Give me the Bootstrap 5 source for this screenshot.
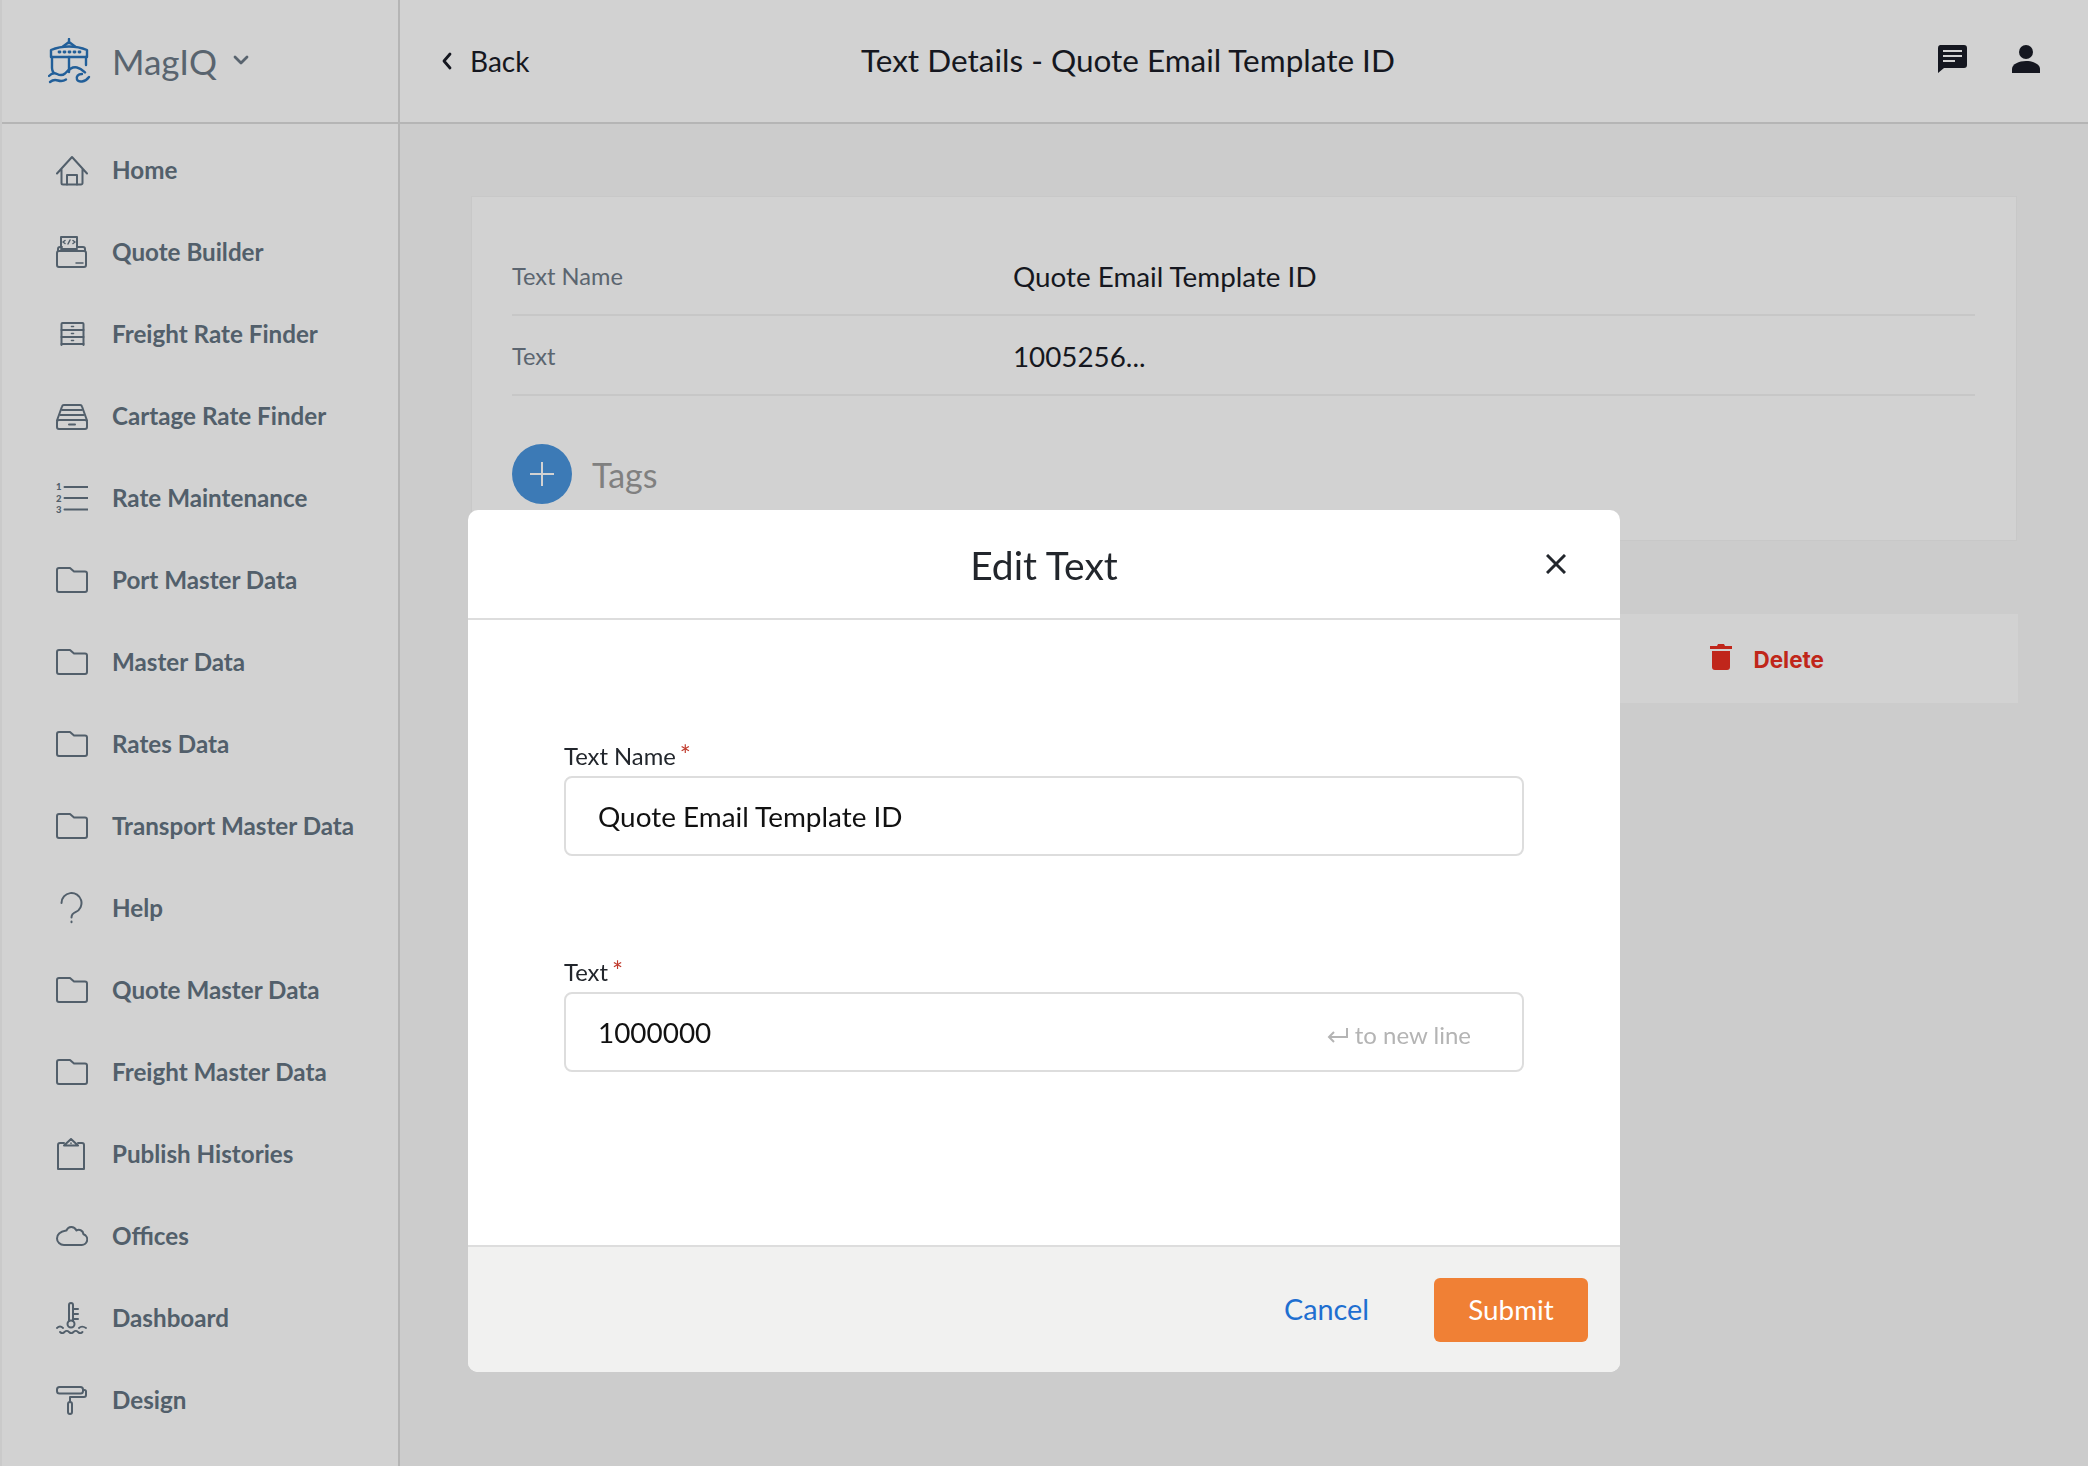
<!doctype html>
<html lang="en">
<head>
    <meta charset="utf-8">
    <title>MagIQ - Text Details</title>
    <meta name="viewport" content="width=device-width, initial-scale=1">

    <!-- Bootstrap 5 CDN -->
    <link href="https://cdn.jsdelivr.net/npm/bootstrap@5.3.3/dist/css/bootstrap.min.css" rel="stylesheet">

    <style>
        body {
            font-family: "Lato", "Liberation Sans", sans-serif;
            background-color: #f8f8f8;
            color: #1a1d27;
            overflow: hidden;
        }
        .app-shell { height: 1466px; }

        /* sidebar */
        .side-col {
            width: 400px;
            flex: 0 0 400px;
            background: #fff;
            border-right: 2px solid #dcdcdc;
            border-left: 2px solid #f6f6f6;
        }
        .top-cell {
            height: 124px;
            border-bottom: 2px solid #dcdcdc;
            background: #fff;
        }
        .brand-box { padding-left: 46px; }
        .brand-name {
            font-size: 35px;
            line-height: 44px;
            height: 42px;
            overflow: hidden;
            color: #6d7a87;
            margin-left: 20px;
            margin-bottom: 3px;
        }
        .brand-caret { margin-left: 16px; margin-bottom: 1px; }
        .menu-list { padding-top: 5px; }
        .menu-item {
            height: 82px;
            padding-left: 54px;
            gap: 24px;
            color: #647482;
            font-size: 24.2px;
            font-weight: 700;
        }
        .menu-item svg { flex: 0 0 32px; }
        .line-icon {
            fill: none;
            stroke: #647482;
            stroke-width: 2;
            stroke-linecap: round;
            stroke-linejoin: round;
        }
        .line-icon text { fill: #647482; stroke: none; font-size: 9.5px; font-weight: 900; }

        /* header */
        .back-link { font-size: 28px; margin-left: 41px; width: 420px; }
        .back-link span { margin-left: 1px; }
        .page-title { font-size: 31.5px; }
        .head-icons { gap: 44px; padding-right: 47px; padding-bottom: 5px; }

        /* details */
        .main-body { padding: 72px 71px 0 71px; }
        .detail-box {
            background: #fff;
            border: 1px solid #f3f3f3;
            padding: 39px 41px 36px 40px;
        }
        .detail-row {
            height: 80px;
            padding-top: 4px;
            border-bottom: 2px solid #f2f2f2;
        }
        .detail-key { width: 501px; color: #6f7b88; font-size: 23.6px; }
        .detail-val { font-size: 27.8px; }
        .tag-row { margin-top: 48px; gap: 20px; }
        .add-dot {
            width: 60px;
            height: 60px;
            background: #4a95dd;
        }
        .tag-label { font-size: 34px; color: #9c9c9c; }
        .action-bar {
            height: 89px;
            margin-top: 73px;
            margin-right: -1px;
            background: #fff;
            padding-top: 2px;
            padding-right: 194px;
            color: #ea2f21;
            font-family: "Inter", "Liberation Sans", sans-serif;
            font-weight: 700;
            font-size: 22.5px;
            gap: 21px;
        }
        .trash-mark { margin-bottom: 6px; }

        /* dialog */
        .modal-backdrop.show { opacity: .176; }
        .edit-dialog {
            max-width: 1152px;
            margin: 510px auto 0 auto;
        }
        .edit-dialog .modal-content { border: 0; border-radius: 10px; overflow: hidden; }
        .edit-dialog .modal-header {
            height: 110px;
            border-bottom: 2px solid #ddd;
            padding: 2px 0 0 0;
        }
        .edit-dialog .modal-title { font-size: 39px; font-weight: 400; color: #22262c; }
        .close-x {
            position: absolute;
            right: 54px;
            top: 44px;
            padding: 0;
            border: 0;
            background: none;
            line-height: 0;
        }
        .edit-dialog .modal-body {
            height: 625px;
            padding: 121px 96px 0 96px;
        }
        .field-gap { margin-bottom: 101px; }
        .field-label { height: 30px; font-size: 23.8px; line-height: 30px; margin-bottom: 5px; color: #22262c; }
        .req-star { color: #c0392b; margin-left: 4px; font-size: 26px; line-height: 0; }
        .edit-dialog .form-control {
            height: 80px;
            border: 2px solid #ddd;
            border-radius: 8px;
            padding: 0 32px;
            font-size: 27.9px;
            color: #111;
        }
        .newline-hint {
            position: absolute;
            right: 53px;
            top: 28px;
            color: #b4b4b4;
            font-size: 24px;
            line-height: 30px;
            gap: 7px;
        }
        .edit-dialog .modal-footer {
            height: 127px;
            background: #f1f1f0;
            border-top: 2px solid #ddd;
            padding: 0 32px 0 0;
            gap: 65px;
            border-radius: 0;
        }
        .edit-dialog .modal-footer > * { margin: 0; }
        .cancel-link { color: #1f6fd0; font-size: 28.8px; text-decoration: none; }
        .btn-submit {
            width: 154px;
            height: 64px;
            background: #f08035;
            border: 0;
            border-radius: 6px;
            color: #fff;
            font-size: 27.8px;
        }
    </style>
</head>
<body>
<div class="app-shell d-flex">

    <!-- Sidebar -->
    <div class="side-col d-flex flex-column">
        <div class="top-cell brand-box d-flex align-items-center">
            <svg width="44" height="46" viewBox="0 0 44 46" fill="none" stroke="#2a74ba" stroke-width="2.4" stroke-linecap="round" stroke-linejoin="round">
                <path d="M21 1v4M15 8.500 21 4l6 4.500"/>
                <path d="M3 12c6-2.500 12-3.500 18-3.500S33 9.500 39 12v7H3z"/>
                <path d="M4 19v11c0 1.500 .5 3 1.500 4.500M38 19v8"/>
                <path d="M21 19v15"/>
                <path d="M11 14h1M16 14h1M21 14h1M26 14h1M31 14h1" stroke-width="2.800"/>
                <path d="M1 38c3-3 5-3.500 8-2 3 1.500 5 2 8-.5 4-4 7-7 12-6 4 .8 6 3 8 5"/>
                <path d="M2 44c3-2.500 5-2.500 8-1.500s5 1 8-1"/>
                <path d="M34 36c-4 0-6 2.500-5 5.500 1.500 3 8 3 12-2.500"/>
            </svg>
            <span class="brand-name">MagIQ</span>
            <svg class="brand-caret" width="16" height="11" viewBox="0 0 16 11" fill="none" stroke="#6d7a87" stroke-width="2.800" stroke-linecap="round" stroke-linejoin="round"><path d="M2 2l6 6 6-6"/></svg>
        </div>

        <div class="menu-list">
            <div class="menu-item d-flex align-items-center">
                <svg class="line-icon" width="32" height="32" viewBox="0 0 32 32"><path d="M1 19.500 16 3l15 16.500M5.500 15v14a1.500 1.500 0 0 0 1.500 1.500h18a1.500 1.500 0 0 0 1.500-1.500V15"/><path d="M11 30.500V21h10v9.500"/></svg>
                <span>Home</span>
            </div>
            <div class="menu-item d-flex align-items-center">
                <svg class="line-icon" width="32" height="32" viewBox="0 0 32 32"><rect x="1" y="15" width="29" height="16" rx="2"/><path d="M2 15v-2a2 2 0 0 1 2-2h2M21 11h6a2 2 0 0 1 2 2v2"/><path d="M5 11V1h16v10M21 13H5"/><path d="M9 4.500 7 6l2 1.500M17 4.500 19 6l-2 1.500M14 4l-2 4M20 27h7" stroke-width="1.500"/></svg>
                <span>Quote Builder</span>
            </div>
            <div class="menu-item d-flex align-items-center">
                <svg class="line-icon" width="32" height="32" viewBox="0 0 32 32"><path d="M5.500 27V6a1 1 0 0 1 1-1h20a1 1 0 0 1 1 1v21"/><path d="M5.500 12h22M5.500 19h22M5.500 26h22"/><path d="M15.500 8.500h2M15.500 15.500h2M15.500 22.500h2" stroke-width="1.600"/></svg>
                <span>Freight Rate Finder</span>
            </div>
            <div class="menu-item d-flex align-items-center">
                <svg class="line-icon" width="32" height="32" viewBox="0 0 32 32"><path d="M1 20.500 6 6.500a2 2 0 0 1 2-1.500h16a2 2 0 0 1 2 1.500l5 14"/><rect x="1" y="20" width="30" height="9" rx="2"/><path d="M6 10h20M4.500 15h23M13 24.500h6"/></svg>
                <span>Cartage Rate Finder</span>
            </div>
            <div class="menu-item d-flex align-items-center">
                <svg class="line-icon" width="32" height="32" viewBox="0 0 32 32"><path d="M8.500 5h23M8.500 16h23M8.500 27.500h23"/><text x="0" y="8">1</text><text x="0" y="19.500">2</text><text x="0" y="30.500">3</text></svg>
                <span>Rate Maintenance</span>
            </div>
            <div class="menu-item d-flex align-items-center">
                <svg class="line-icon" width="32" height="32" viewBox="0 0 32 32"><path d="M1 26V6a2 2 0 0 1 2-2h11l4 3.500h11a2 2 0 0 1 2 2V26a2 2 0 0 1-2 2H3a2 2 0 0 1-2-2z"/></svg>
                <span>Port Master Data</span>
            </div>
            <div class="menu-item d-flex align-items-center">
                <svg class="line-icon" width="32" height="32" viewBox="0 0 32 32"><path d="M1 26V6a2 2 0 0 1 2-2h11l4 3.500h11a2 2 0 0 1 2 2V26a2 2 0 0 1-2 2H3a2 2 0 0 1-2-2z"/></svg>
                <span>Master Data</span>
            </div>
            <div class="menu-item d-flex align-items-center">
                <svg class="line-icon" width="32" height="32" viewBox="0 0 32 32"><path d="M1 26V6a2 2 0 0 1 2-2h11l4 3.500h11a2 2 0 0 1 2 2V26a2 2 0 0 1-2 2H3a2 2 0 0 1-2-2z"/></svg>
                <span>Rates Data</span>
            </div>
            <div class="menu-item d-flex align-items-center">
                <svg class="line-icon" width="32" height="32" viewBox="0 0 32 32"><path d="M1 26V6a2 2 0 0 1 2-2h11l4 3.500h11a2 2 0 0 1 2 2V26a2 2 0 0 1-2 2H3a2 2 0 0 1-2-2z"/></svg>
                <span>Transport Master Data</span>
            </div>
            <div class="menu-item d-flex align-items-center">
                <svg class="line-icon" width="32" height="32" viewBox="0 0 32 32"><path d="M5.500 11a10 10 0 1 1 14 9.200c-3 1.300-4 2.500-4 5.300M15.500 29.500v.8"/></svg>
                <span>Help</span>
            </div>
            <div class="menu-item d-flex align-items-center">
                <svg class="line-icon" width="32" height="32" viewBox="0 0 32 32"><path d="M1 26V6a2 2 0 0 1 2-2h11l4 3.500h11a2 2 0 0 1 2 2V26a2 2 0 0 1-2 2H3a2 2 0 0 1-2-2z"/></svg>
                <span>Quote Master Data</span>
            </div>
            <div class="menu-item d-flex align-items-center">
                <svg class="line-icon" width="32" height="32" viewBox="0 0 32 32"><path d="M1 26V6a2 2 0 0 1 2-2h11l4 3.500h11a2 2 0 0 1 2 2V26a2 2 0 0 1-2 2H3a2 2 0 0 1-2-2z"/></svg>
                <span>Freight Master Data</span>
            </div>
            <div class="menu-item d-flex align-items-center">
                <svg class="line-icon" width="32" height="32" viewBox="0 0 32 32"><path d="M2 31V7a2 2 0 0 1 2-2h4M22 5h4a2 2 0 0 1 2 2v24H2"/><path d="M8 7.500 15 1l7 6.500z"/><path d="M15 5v.5" stroke-width="1.500"/></svg>
                <span>Publish Histories</span>
            </div>
            <div class="menu-item d-flex align-items-center">
                <svg class="line-icon" width="32" height="32" viewBox="0 0 32 32"><path d="M8 25h17.500a5.500 5.500 0 0 0 2-10.700C27 10 23 9 20.500 10.500 18 5.500 12 6 10.500 10.500 8 11 1 12 1 18.500 1 22 4 25 8 25z"/></svg>
                <span>Offices</span>
            </div>
            <div class="menu-item d-flex align-items-center">
                <svg class="line-icon" width="32" height="32" viewBox="0 0 32 32"><path d="M13 19V3a2 2 0 0 1 4 0v16"/><circle cx="15" cy="22" r="3.500"/><path d="M17 7h5M17 12h5M17 17h5"/><path d="M1 26c2-2 4-2 6 0M23 26c2-2 4-2 7 0M4 30c1.500 1.500 3 1.500 4.500 0s3-1.500 4.500 0 3 1.500 4.500 0 3-1.500 4.500 0 3 1.500 4.500 0" stroke-width="1.800"/></svg>
                <span>Dashboard</span>
            </div>
            <div class="menu-item d-flex align-items-center">
                <svg class="line-icon" width="32" height="32" viewBox="0 0 32 32"><rect x="1" y="3" width="26" height="6.500" rx="2.500"/><path d="M27 6h1.500a1.500 1.500 0 0 1 1.500 1.500V11a2 2 0 0 1-2 2H14v5"/><rect x="12" y="18" width="4" height="12" rx="2"/></svg>
                <span>Design</span>
            </div>
        </div>
    </div>

    <!-- Main area -->
    <div class="flex-grow-1 d-flex flex-column">
        <div class="top-cell d-flex align-items-center">
            <div class="back-link d-flex align-items-center gap-3">
                <svg width="12" height="18" viewBox="0 0 12 18" fill="none" stroke="#1a1d27" stroke-width="2.800" stroke-linecap="round" stroke-linejoin="round"><path d="M9 2 3 9l6 7"/></svg>
                <span>Back</span>
            </div>
            <div class="page-title">Text Details - Quote Email Template ID</div>
            <div class="head-icons ms-auto d-flex align-items-center">
                <svg width="30" height="28" viewBox="0 0 30 28"><path fill="#1a1d27" d="M3 0h24a3 3 0 0 1 3 3v17a3 3 0 0 1-3 3H7l-6 5V3a3 3 0 0 1 2-3z"/><path stroke="#fff" stroke-width="2" d="M6 6h19M6 11h19M6 16h12"/></svg>
                <svg width="30" height="28" viewBox="0 0 30 28"><circle cx="15" cy="7" r="7" fill="#1a1d27"/><path fill="#1a1d27" d="M1 24c0-5 7-8 14-8s14 3 14 8v4H1z"/></svg>
            </div>
        </div>

        <div class="main-body">
            <div class="detail-box">
                <div class="detail-row d-flex align-items-center">
                    <div class="detail-key">Text Name</div>
                    <div class="detail-val">Quote Email Template ID</div>
                </div>
                <div class="detail-row d-flex align-items-center">
                    <div class="detail-key">Text</div>
                    <div class="detail-val">1005256...</div>
                </div>
                <div class="tag-row d-flex align-items-center">
                    <div class="add-dot rounded-circle d-flex align-items-center justify-content-center">
                        <svg width="26" height="26" viewBox="0 0 26 26"><path stroke="#fff" stroke-width="2" d="M13 1v24M1 13h24"/></svg>
                    </div>
                    <span class="tag-label">Tags</span>
                </div>
            </div>

            <div class="action-bar d-flex align-items-center justify-content-end">
                <svg class="trash-mark" width="22" height="26" viewBox="0 0 22 26"><path fill="#ea2f21" d="M8 0h6l1 2h7v3H0V2h7zM2 7h18v16a3 3 0 0 1-3 3H5a3 3 0 0 1-3-3z"/></svg>
                <span>Delete</span>
            </div>
        </div>
    </div>
</div>

<!-- Edit dialog -->
<div class="modal-backdrop show"></div>
<div class="modal d-block" tabindex="-1">
    <div class="modal-dialog edit-dialog">
        <div class="modal-content">
            <div class="modal-header justify-content-center position-relative">
                <h5 class="modal-title">Edit Text</h5>
                <button class="close-x" type="button" aria-label="Close">
                    <svg width="20" height="20" viewBox="0 0 20 20"><path stroke="#22262c" stroke-width="3" d="M1 1l18 18M19 1 1 19"/></svg>
                </button>
            </div>
            <div class="modal-body">
                <div class="field-gap">
                    <div class="field-label">Text Name<span class="req-star">*</span></div>
                    <input class="form-control" type="text" value="Quote Email Template ID">
                </div>
                <div>
                    <div class="field-label">Text<span class="req-star">*</span></div>
                    <div class="position-relative">
                        <input class="form-control" type="text" value="1000000">
                        <div class="newline-hint d-flex align-items-center">
                            <svg width="21" height="16" viewBox="0 0 21 16" fill="none" stroke="#b4b4b4" stroke-width="2"><path d="M20 1v9H2M7 5l-5 5 5 5"/></svg>
                            <span>to new line</span>
                        </div>
                    </div>
                </div>
            </div>
            <div class="modal-footer">
                <a class="cancel-link" href="#">Cancel</a>
                <button class="btn-submit" type="button">Submit</button>
            </div>
        </div>
    </div>
</div>

<script src="https://cdn.jsdelivr.net/npm/bootstrap@5.3.3/dist/js/bootstrap.bundle.min.js"></script>
</body>
</html>
